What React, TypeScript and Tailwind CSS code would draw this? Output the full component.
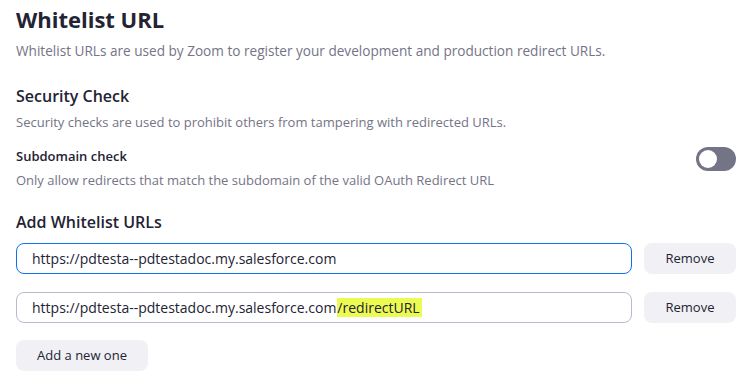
import React, { useState } from 'react';

const urls = [
  { id: 1, base: 'https://pdtesta--pdtestadoc.my.salesforce.com', mark: '', focused: true },
  { id: 2, base: 'https://pdtesta--pdtestadoc.my.salesforce.com', mark: '/redirectURL', focused: false },
];

export default function App() {
  const [subdomain, setSubdomain] = useState(false);

  return (
    <div className="min-h-screen bg-white pl-4 pr-[9px] pt-1 font-['Open_Sans',sans-serif] text-[#232333]">
      {/* Header */}
      <h1 className="text-[22px] font-bold leading-[30px]">Whitelist URL</h1>
      <p className="mt-[7px] text-[13.6px] leading-5 text-[#747487]">
        Whitelist URLs are used by Zoom to register your development and production redirect URLs.
      </p>

      {/* Security Check */}
      <h2 className="mt-[23px] text-[16px] font-semibold leading-6">Security Check</h2>
      <p className="mt-1 text-[13px] leading-5 text-[#747487]">
        Security checks are used to prohibit others from tampering with redirected URLs.
      </p>

      <div className="mt-[14px] flex items-start justify-between">
        <div>
          <div className="text-[13px] font-semibold leading-5">Subdomain check</div>
          <p className="mt-1 text-[13px] leading-5 text-[#747487]">
            Only allow redirects that match the subdomain of the valid OAuth Redirect URL
          </p>
        </div>
        <button
          onClick={() => setSubdomain(!subdomain)}
          className={`mt-[1px] flex h-6 w-10 items-center rounded-full px-[3px] ${
            subdomain ? 'justify-end bg-[#0e72ed]' : 'justify-start bg-[#747487]'
          }`}
        >
          <span className="h-[18px] w-[18px] rounded-full bg-white" />
        </button>
      </div>

      {/* Add Whitelist URLs */}
      <h2 className="mt-5 text-[16px] font-semibold leading-6">Add Whitelist URLs</h2>
      <div className="mt-[9px] flex flex-col gap-[18px]">
        {urls.map((u) => (
          <div key={u.id} className="flex items-center gap-3">
            <div
              className={`flex h-[31px] flex-1 items-center rounded-lg border bg-white pl-[15px] text-[14px] ${
                u.focused ? 'border-[#0e72ed]' : 'border-[#babacc]'
              }`}
            >
              <span>{u.base}</span>
              {u.mark && <span className="ml-px bg-[#ecfb52] pr-[2px] leading-[19px]">{u.mark}</span>}
            </div>
            <button className="h-[31px] w-[92px] rounded-lg bg-[#f1f1f5] text-[13px]">Remove</button>
          </div>
        ))}
      </div>
      <button className="mt-[17px] h-[31px] w-[132px] rounded-lg bg-[#f1f1f5] text-[13px]">Add a new one</button>
    </div>
  );
}
